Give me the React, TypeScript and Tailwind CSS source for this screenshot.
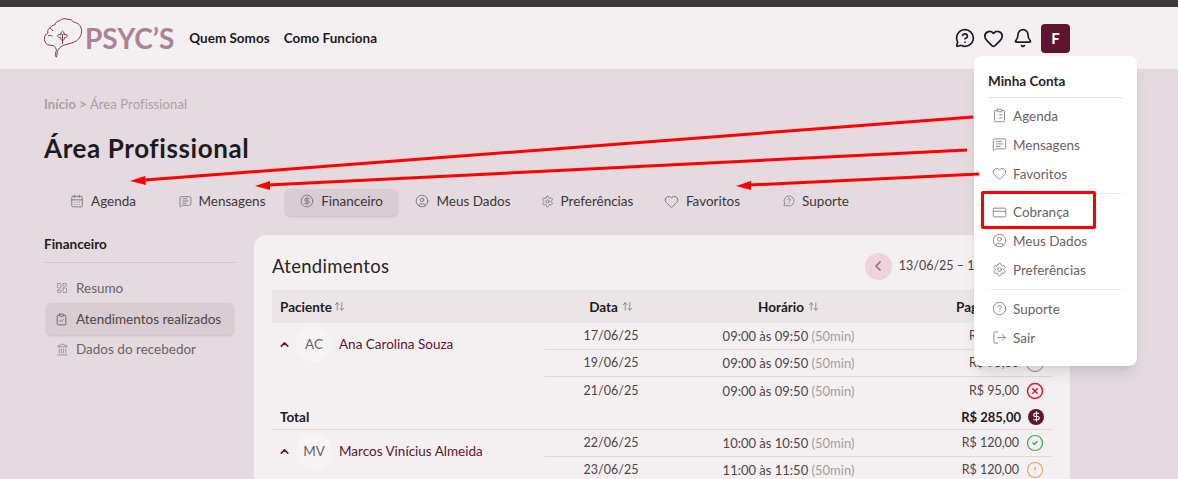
import {
  ArrowUpDown,
  Bell,
  CalendarDays,
  ChevronLeft,
  ChevronRight,
  ChevronUp,
  CircleAlert,
  CircleCheck,
  CircleDollarSign,
  CircleHelp,
  CircleUser,
  CircleX,
  ClipboardCheck,
  ClipboardList,
  CreditCard,
  DollarSign,
  Heart,
  Landmark,
  LayoutDashboard,
  LogOut,
  MessageCircleQuestion,
  MessageSquareText,
  Settings,
} from "lucide-react";

const tabs = [
  { label: "Agenda", icon: CalendarDays, width: "w-[118px]", size: "size-[14px]" },
  { label: "Mensagens", icon: MessageSquareText, width: "w-[120px]", size: "size-[13px]" },
  { label: "Financeiro", icon: CircleDollarSign, width: "w-[113px]", size: "size-[14px]", active: true },
  { label: "Meus Dados", icon: CircleUser, width: "w-[128px]", size: "size-[14px]" },
  { label: "Preferências", icon: Settings, width: "w-[120px]", size: "size-[13px]" },
  { label: "Favoritos", icon: Heart, width: "w-[110px]", size: "size-[15px]" },
  { label: "Suporte", icon: MessageCircleQuestion, width: "w-[118px]", size: "size-[12px]" },
];

function MenuItem({ icon: Icon, label, tight }: { icon: typeof Heart; label: string; tight?: boolean }) {
  return (
    <div className={`flex items-center gap-[6px] pl-[4px] text-[#6a6367] ${tight ? "h-[28px]" : "h-[29px]"}`}>
      <Icon className="size-[15px] shrink-0 text-[#8b8488]" strokeWidth={1.5} />
      <span>{label}</span>
    </div>
  );
}

function Row({
  date,
  time,
  price,
  status,
  last,
}: {
  date: string;
  time: string;
  price: string;
  status: "ok" | "late" | "no" | "none";
  last?: boolean;
}) {
  return (
    <div
      className={`grid h-[27px] grid-cols-[132px_223px_1fr] items-center text-center text-[12.5px] text-[#4c4549] ${
        last ? "" : "border-b border-[#e2d6db]"
      }`}
    >
      <span>{date}</span>
      <span className="text-[13px]">
        {time} <span className="text-[#a39ca0]">(50min)</span>
      </span>
      <div className="flex items-center justify-end gap-[7px] pr-[8px]">
        <span>{price}</span>
        {status === "ok" && <CircleCheck className="size-[18px] text-[#3aa655]" strokeWidth={1.6} />}
        {status === "late" && <CircleAlert className="size-[18px] text-[#e6a564]" strokeWidth={1.6} />}
        {status === "no" && <CircleX className="size-[18px] text-[#e8112d]" strokeWidth={2} />}
        {status === "none" && <span className="size-[18px] rounded-full border border-[#8b8488]" />}
      </div>
    </div>
  );
}

function Patient({ initials, name }: { initials: string; name: string }) {
  return (
    <div className="flex w-[273px] shrink-0 items-start pl-[6px] pt-[3px] text-[13.5px]">
      <ChevronUp className="mr-[5px] mt-[12px] size-[13px] text-[#5f1530]" strokeWidth={3} />
      <span className="flex size-[36px] items-center justify-center rounded-full bg-[#f7f4f5] text-[#6a6367]">
        {initials}
      </span>
      <span className="ml-[7px] mt-[9px] text-[#5f1530]">{name}</span>
    </div>
  );
}

export default function App() {
  return (
    <div className="relative h-[479px] w-[1178px] overflow-hidden bg-[#e4dadf] font-[Lato,sans-serif] text-[13.5px] leading-[18px] text-[#1f1a1f]">
      <div className="h-[7px] bg-[#3a3a3a]" />
      <header className="flex h-[62px] items-center justify-between bg-[#f4f0f2] pl-[44px] pr-[108px]">
        <div className="flex items-center">
          <svg viewBox="0 0 40 42" className="h-[42px] w-[40px]" fill="none" stroke="#6f2a44" strokeWidth="0.9" strokeLinejoin="round">
            <path d="M12 40c-1-2-.6-5 .5-6.500-.6-2.500-1.500-4-3.500-5-2-.2-4-.4-5.500-.8C1.500 26.500 0 23.500.4 21c.2-2.500 1.600-4 3.600-5-.7-1.600-.2-4 1.800-5 1-1.500 3-3 5.200-3.200C11.500 5.500 13 4 15.500 3.800 18 1.500 21.500 1 24 2.500c2.500-.4 4.500.8 5.500 2.600 2.500.2 5 1.500 6.500 3.600 1.500 2 1.900 5.300 1.300 8.300-1 3.500-3.500 6.500-6.800 8-3 1.200-6 1.800-9.500 2.800-3 .8-5.500 2.700-7 5.200-1 1.700-1 4.600-1.500 7z" />
            <path d="M4 19c1.500-.8 3-.8 4.500.2M6 11.500c1.200.2 2.500 1.200 2.800 2.500" />
            <path d="M18.500 14c1.500 1.200 2 2.500 1.500 4 1.200-.8 2.800-.6 3.500.4-.5 1.800-2 2.600-3.500 2.400.6 1 .2 2.200-1.500 3-1.700-.8-2.100-2-1.500-3-1.500.2-3-.6-3.500-2.400.7-1 2.300-1.200 3.500-.4-.5-1.500 0-2.800 1.500-4zM18.500 17v10" />
          </svg>
          <span className="ml-[1px] text-[28px] font-bold leading-none text-[#ab8295]">PSYC’S</span>
          <nav className="ml-[15px] flex gap-[14px] font-bold text-[#1f1a1f]">
            <span>Quem Somos</span>
            <span>Como Funciona</span>
          </nav>
        </div>
        <div className="flex items-center text-[#1f1a1f]">
          <MessageCircleQuestion className="size-[20px]" strokeWidth={2} />
          <Heart className="ml-[8px] size-[21px]" strokeWidth={2} />
          <Bell className="ml-[9px] size-[20px]" strokeWidth={2} />
          <span className="ml-[8px] flex size-[29px] items-center justify-center rounded-[4px] bg-[#5f1530] text-[15px] font-bold text-white">
            F
          </span>
        </div>
      </header>

      <main className="pl-[44px] pr-[108px] pt-[27px]">
        <div className="h-[16px] text-[13px] leading-[16px] tracking-[0.1px] text-[#b29aa6]">
          <span className="font-bold">Início &gt;</span> Área Profissional
        </div>
        <h1 className="mt-[18px] h-[36px] text-[26px] font-bold leading-[36px] tracking-[0.6px]">Área Profissional</h1>
        <div className="mt-[23px] flex">
          {tabs.map((tab) => (
            <div
              key={tab.label}
              className={`flex h-[27px] items-center justify-center gap-[7px] rounded-[6px] pb-[3px] ${tab.width} ${
                tab.active ? "ml-[3px] mr-[1px] bg-[#d9ccd3] shadow-sm" : ""
              }`}
            >
              <tab.icon className={`${tab.size} text-[#77707a]`} strokeWidth={1.5} />
              <span className="text-[#3d363b]">{tab.label}</span>
            </div>
          ))}
        </div>

        <div className="mt-[19px] flex gap-[18px]">
          <aside className="w-[192px] shrink-0">
            <div className="h-[28px] border-b border-[#d3c8ce] font-bold">Financeiro</div>
            <div className="mt-[9px] flex flex-col text-[#4c4549]">
              <div className="flex h-[31px] items-center gap-[8px] pl-[12px] text-[#6a6367]">
                <LayoutDashboard className="size-[12px] text-[#8b8488]" strokeWidth={1.5} />
                Resumo
              </div>
              <div className="ml-[2px] flex h-[32px] w-[188px] items-center gap-[8px] rounded-[6px] bg-[#d9ccd3] pl-[9px] shadow-sm">
                <ClipboardCheck className="size-[13px] text-[#5c5458]" strokeWidth={1.5} />
                Atendimentos realizados
              </div>
              <div className="flex h-[28px] items-center gap-[7px] pl-[12px] text-[#6a6367]">
                <Landmark className="size-[13px] text-[#8b8488]" strokeWidth={1.5} />
                Dados do recebedor
              </div>
            </div>
          </aside>

          <section className="h-[300px] flex-1 rounded-[12px] bg-[#f4f0f2] px-[18px] pt-[17px]">
            <div className="flex h-[28px] items-center justify-between">
              <h2 className="text-[18.5px] tracking-[0.3px] text-[#2a2428]">Atendimentos</h2>
              <div className="-mr-[4px] flex items-center gap-[7px] text-[12.5px] text-[#4c4549]">
                <span className="flex size-[27px] items-center justify-center rounded-full bg-[#ecd3dd] text-[#9a6a7f]">
                  <ChevronLeft className="size-[16px]" strokeWidth={2.5} />
                </span>
                <span>13/06/25 – 13/07/25</span>
                <span className="flex size-[27px] items-center justify-center rounded-full bg-[#ecd3dd] text-[#9a6a7f]">
                  <ChevronRight className="size-[16px]" strokeWidth={2.5} />
                </span>
              </div>
            </div>

            <div className="mt-[10px]">
              <div className="flex h-[33px] items-center bg-[#ebe5e7] font-bold">
                <div className="flex w-[273px] items-center gap-[2px] pl-[8px]">
                  Paciente <ArrowUpDown className="size-[11px] text-[#6a6367]" strokeWidth={1.5} />
                </div>
                <div className="flex w-[132px] items-center justify-center gap-[4px]">
                  Data <ArrowUpDown className="size-[11px] text-[#6a6367]" strokeWidth={1.5} />
                </div>
                <div className="flex w-[223px] items-center justify-center gap-[4px]">
                  Horário <ArrowUpDown className="size-[11px] text-[#6a6367]" strokeWidth={1.5} />
                </div>
                <div className="flex-1 pl-[56px]">Pagamento</div>
              </div>

              <div className="flex">
                <Patient initials="AC" name="Ana Carolina Souza" />
                <div className="flex-1">
                  <Row date="17/06/25" time="09:00 às 09:50" price="R$ 95,00" status="ok" />
                  <Row date="19/06/25" time="09:00 às 09:50" price="R$ 95,00" status="none" />
                  <Row date="21/06/25" time="09:00 às 09:50" price="R$ 95,00" status="no" last />
                </div>
              </div>
              <div className="flex h-[26px] items-center justify-between border-b border-[#e2d6db] px-[8px] font-bold">
                <span>Total</span>
                <div className="flex items-center gap-[7px] text-[13px]">
                  <span>R$ 285,00</span>
                  <span className="flex size-[16px] items-center justify-center rounded-full bg-[#5f1530] text-white">
                    <DollarSign className="size-[11px]" strokeWidth={2.5} />
                  </span>
                </div>
              </div>
              <div className="flex">
                <Patient initials="MV" name="Marcos Vinícius Almeida" />
                <div className="flex-1">
                  <Row date="22/06/25" time="10:00 às 10:50" price="R$ 120,00" status="ok" />
                  <Row date="23/06/25" time="11:00 às 11:50" price="R$ 120,00" status="late" />
                </div>
              </div>
            </div>
          </section>
        </div>
      </main>

      {/* dropdown aberto */}
      <div className="absolute left-[974px] top-[56px] h-[310px] w-[163px] rounded-[8px] bg-white px-[14px] pt-[16px] shadow-lg">
        <div className="h-[26px] border-b border-[#e6e1e3] font-bold text-[#2a2428]">Minha Conta</div>
        <div className="pt-[3px]">
          <MenuItem icon={ClipboardList} label="Agenda" />
          <MenuItem icon={MessageSquareText} label="Mensagens" />
          <MenuItem icon={Heart} label="Favoritos" />
        </div>
        <div className="mt-[5px] border-t border-[#eee6e9] pt-[4px]">
          <MenuItem icon={CreditCard} label="Cobrança" tight />
          <MenuItem icon={CircleUser} label="Meus Dados" />
          <MenuItem icon={Settings} label="Preferências" />
        </div>
        <div className="mt-[5px] border-t border-[#eee6e9] pt-[4px]">
          <MenuItem icon={CircleHelp} label="Suporte" />
          <MenuItem icon={LogOut} label="Sair" />
        </div>
      </div>

      {/* anotações em vermelho */}
      <div className="absolute left-[981px] top-[191px] h-[38px] w-[115px] rounded-[2px] border-[3px] border-[#ff0000]" />
      <svg className="pointer-events-none absolute inset-0 h-[479px] w-[1178px]" viewBox="0 0 1178 479" fill="none">
        <path d="M973 117 145 180" stroke="#ff0000" strokeWidth="3" />
        <path d="M130 181 145 176 146 185Z" fill="#ff0000" />
        <path d="M967 150 268 185" stroke="#ff0000" strokeWidth="3" />
        <path d="M255 186 270 181 270 190Z" fill="#ff0000" />
        <path d="M979 174 750 185" stroke="#ff0000" strokeWidth="3" />
        <path d="M736 186 751 181 751 190Z" fill="#ff0000" />
      </svg>
    </div>
  );
}
